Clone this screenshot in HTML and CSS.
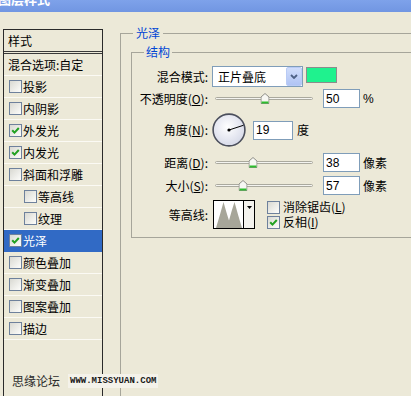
FILE: index.html
```html
<!DOCTYPE html>
<html>
<head>
<meta charset="utf-8">
<link rel="stylesheet" href="styles.css">
</head>
<body>
<div class="titlebar"><span class="title">图层样式</span></div>
<div class="main">
  <div class="list">
    <div class="list-head">样式</div>
    <div class="item blend">混合选项:自定</div>
    <div class="item"><span class="cb"></span>投影</div>
    <div class="item"><span class="cb"></span>内阴影</div>
    <div class="item"><span class="cb"><svg viewBox="0 0 11 11"><path d="M2.2 5.2 L4.5 7.6 L8.8 3" /></svg></span>外发光</div>
    <div class="item"><span class="cb"><svg viewBox="0 0 11 11"><path d="M2.2 5.2 L4.5 7.6 L8.8 3" /></svg></span>内发光</div>
    <div class="item"><span class="cb"></span>斜面和浮雕</div>
    <div class="item sub"><span class="cb"></span>等高线</div>
    <div class="item sub"><span class="cb"></span>纹理</div>
    <div class="item sel"><span class="cb"><svg viewBox="0 0 11 11"><path d="M2.2 5.2 L4.5 7.6 L8.8 3" /></svg></span>光泽</div>
    <div class="item"><span class="cb"></span>颜色叠加</div>
    <div class="item"><span class="cb"></span>渐变叠加</div>
    <div class="item"><span class="cb"></span>图案叠加</div>
    <div class="item"><span class="cb"></span>描边</div>
  </div>
  <fieldset class="group outer">
    <legend>光泽</legend>
    <fieldset class="group inner">
      <legend>结构</legend>
      <div class="row r1">
        <div class="lbl">混合模式:</div>
        <div class="select"><span>正片叠底</span><span class="ddbtn"><svg viewBox="0 0 8 5" width="8" height="5"><path d="M1 1 L4 4 L7 1" /></svg></span></div>
        <div class="swatch"></div>
      </div>
      <div class="row r2">
        <div class="lbl">不透明度(<u>O</u>):</div>
        <div class="slider"><div class="track"></div><svg class="thumb" style="left:51%" viewBox="0 0 9 11"><path class="tb" d="M0.5 10.5 V4 L4.5 0.5 L8.5 4 V10.5 Z"/><path class="tg" d="M1 9.5 H8"/></svg></div>
        <div class="input w37">50</div><span class="unit latin">%</span>
      </div>
      <div class="row r3">
        <div class="lbl">角度(<u>N</u>):</div>
        <svg class="dial" viewBox="0 0 34 34" width="34" height="34">
          <defs><radialGradient id="dg" cx="45%" cy="40%" r="62%"><stop offset="0" stop-color="#ffffff"/><stop offset="1" stop-color="#d6d9e8"/></radialGradient></defs>
          <circle cx="17" cy="17" r="15.9" fill="url(#dg)" stroke="#4b4f5c" stroke-width="1.6"/>
          <line x1="17" y1="17" x2="31.4" y2="12.3" stroke="#000" stroke-width="1"/>
          <circle cx="17" cy="17" r="1.6" fill="#000"/>
        </svg>
        <div class="input w40">19</div><span class="unit u2">度</span>
      </div>
      <div class="row r4">
        <div class="lbl">距离(<u>D</u>):</div>
        <div class="slider"><div class="track"></div><svg class="thumb" style="left:39%" viewBox="0 0 9 11"><path class="tb" d="M0.5 10.5 V4 L4.5 0.5 L8.5 4 V10.5 Z"/><path class="tg" d="M1 9.5 H8"/></svg></div>
        <div class="input w37">38</div><span class="unit">像素</span>
      </div>
      <div class="row r5">
        <div class="lbl">大小(<u>S</u>):</div>
        <div class="slider"><div class="track"></div><svg class="thumb" style="left:29%" viewBox="0 0 9 11"><path class="tb" d="M0.5 10.5 V4 L4.5 0.5 L8.5 4 V10.5 Z"/><path class="tg" d="M1 9.5 H8"/></svg></div>
        <div class="input w37">57</div><span class="unit">像素</span>
      </div>
      <div class="row r6">
        <div class="lbl">等高线:</div>
        <div class="contour">
          <div class="pic"><svg viewBox="0 0 29 27" width="29" height="27"><path d="M2 27 Q6 14 9.5 1 Q12.5 12 15 19.5 Q17.5 10 20.5 1 Q24 14 28 27 Z" fill="#a7a699"/></svg></div>
          <div class="arr"><svg viewBox="0 0 5 3" width="5" height="3"><path d="M0 0 H5 L2.5 3 Z" fill="#000"/></svg></div>
        </div>
        <div class="checks">
          <div class="chk"><span class="cb"></span><span class="ct">消除锯齿(<u>L</u>)</span></div>
          <div class="chk"><span class="cb"><svg viewBox="0 0 11 11"><path d="M2.2 5.2 L4.5 7.6 L8.8 3" /></svg></span><span class="ct">反相(<u>I</u>)</span></div>
        </div>
      </div>
    </fieldset>
  </fieldset>
</div>
<div class="watermark"><span class="wm-cn">思缘论坛</span><span class="wm-url">WWW.MISSYUAN.COM</span></div>
</body>
</html>
```
FILE: styles.css
```css
* { box-sizing: border-box; }
html, body { margin: 0; padding: 0; }
body {
  width: 411px;
  height: 396px;
  overflow: hidden;
  position: relative;
  background: #ece9d8;
  font: 12px/14px "Noto Sans CJK SC", sans-serif;
  color: #000;
}
u { text-decoration: underline; text-underline-offset: 1px; }

.titlebar {
  height: 12px;
  overflow: hidden;
  background: linear-gradient(#7ea2ea, #7196e2);
}
.title {
  display: block;
  margin: -8px 0 0 -2px;
  font-size: 13px;
  line-height: 13px;
  font-weight: bold;
  color: #fff;
}

.main {
  display: flex;
  align-items: flex-start;
  padding-left: 3px;
  height: 384px;
  overflow: hidden;
}

/* left style list */
.list {
  flex: none;
  width: 100px;
  height: 367px;
  margin-top: 17px;
  border: 1px solid #2a2a2a;
  border-bottom: none;
}
.list-head {
  height: 24px;
  padding-left: 4px;
  display: flex;
  align-items: center;
  border-bottom: 3px double #3a3a3a;
}
.item {
  height: 22px;
  padding-left: 5px;
  display: flex;
  align-items: center;
  border-bottom: 1px solid #fbfaf4;
}
.item.blend { height: 22px; padding-left: 4px; }
.item.sub { padding-left: 20px; }
.item.sel { background: #316ac5; color: #fff; border-bottom-color: #316ac5; }

.cb {
  flex: none;
  width: 13px;
  height: 13px;
  margin-right: 1px;
  border: 1px solid #6e819c;
  background: linear-gradient(135deg, #d9d9d2, #fdfdfb);
  display: flex;
}
.cb svg { width: 11px; height: 11px; }
.cb path { fill: none; stroke: #21a121; stroke-width: 2; }

/* group boxes */
fieldset.group {
  margin: 0;
  min-width: 0;
  border: 1px solid #a6a59a;
}
legend {
  color: #0046d5;
  line-height: 14px;
  padding: 0 2px;
}
fieldset.outer {
  flex: none;
  width: 320px;
  height: 380px;
  margin: 14px 0 0 17px;
  padding: 5px 0 0 10px;
  border-right: none;
  border-bottom: none;
}
.outer > legend { margin-left: 2px; padding: 0 3px; }
fieldset.inner {
  width: 300px;
  padding: 7px 0 8px 0;
  border-right: none;
}
.inner > legend { margin-left: 12px; }

.row { display: flex; align-items: center; }
.r2 { margin-top: 2px; }
.r3 { margin-top: 5px; }
.r4 { margin-top: 6px; }
.r5 { margin-top: 4px; }
.r6 { margin-top: 5px; }
.lbl {
  flex: none;
  width: 76px;
  margin-right: 4px;
  text-align: right;
  white-space: nowrap;
}

.select {
  flex: none;
  width: 91px;
  height: 21px;
  border: 1px solid #7f9db9;
  background: #fff;
  padding-left: 5px;
  display: flex;
  align-items: center;
  justify-content: space-between;
}
.ddbtn {
  width: 16px;
  height: 19px;
  border: 1px solid #b9cbf5;
  border-radius: 2px;
  background: linear-gradient(#d0ddfb, #b0c4f4);
  display: flex;
  align-items: center;
  justify-content: center;
}
.ddbtn path { fill: none; stroke: #4d6185; stroke-width: 1.8; }
.swatch {
  flex: none;
  align-self: flex-start;
  margin: 1px 0 0 3px;
  width: 31px;
  height: 16px;
  border: 1px solid #8c8c8c;
  background: #1ff28e;
}

.slider {
  flex: none;
  position: relative;
  width: 98px;
  height: 19px;
  margin: 0 10px 0 3px;
  display: flex;
  align-items: center;
}
.track {
  width: 100%;
  height: 3px;
  border: 1px solid #aaa99e;
  border-radius: 2px;
  background: #f4f4f0;
}
.thumb {
  position: absolute;
  top: 4px;
  width: 9px;
  height: 11px;
  transform: translateX(-50%);
}
.thumb .tb { fill: #f7f7f3; stroke: #8f8f88; stroke-width: 1; }
.thumb .tg { stroke: #2ebd2e; stroke-width: 2; }

.input {
  flex: none;
  height: 19px;
  border: 1px solid #7f9db9;
  background: #fff;
  padding-left: 2px;
  display: flex;
  align-items: center;
  font-family: "Liberation Sans", sans-serif;
  font-size: 12px;
}
.w37 { width: 37px; }
.w40 { width: 40px; }
.unit { margin-left: 3px; }
.unit.u2 { margin-left: 4px; }
.latin { font-family: "Liberation Sans", sans-serif; }

.dial { flex: none; margin-right: 7px; }

.contour {
  flex: none;
  width: 42px;
  height: 29px;
  margin-left: 1px;
  border: 1px solid #000;
  display: flex;
}
.contour .pic { width: 29px; background: #fff; display: flex; }
.contour .arr {
  width: 11px;
  border-left: 1px solid #000;
  background: #f4f3ee;
  display: flex;
  justify-content: center;
  padding-top: 5px;
}
.checks {
  margin-left: 12px;
  display: flex;
  flex-direction: column;
  gap: 1px;
}
.chk { display: flex; align-items: center; height: 14px; line-height: 14px; }
.chk .cb { margin-right: 3px; }

.watermark {
  position: absolute;
  left: 12px;
  top: 373px;
  display: flex;
  align-items: center;
}
.wm-cn { font-size: 12px; line-height: 16px; color: #2b2b2b; }
.wm-url {
  margin-left: 8px;
  padding: 2px;
  background: #f4f2ea;
  color: #1a1a1a;
  font: bold 9px/10px "Liberation Mono", monospace;
}
```
